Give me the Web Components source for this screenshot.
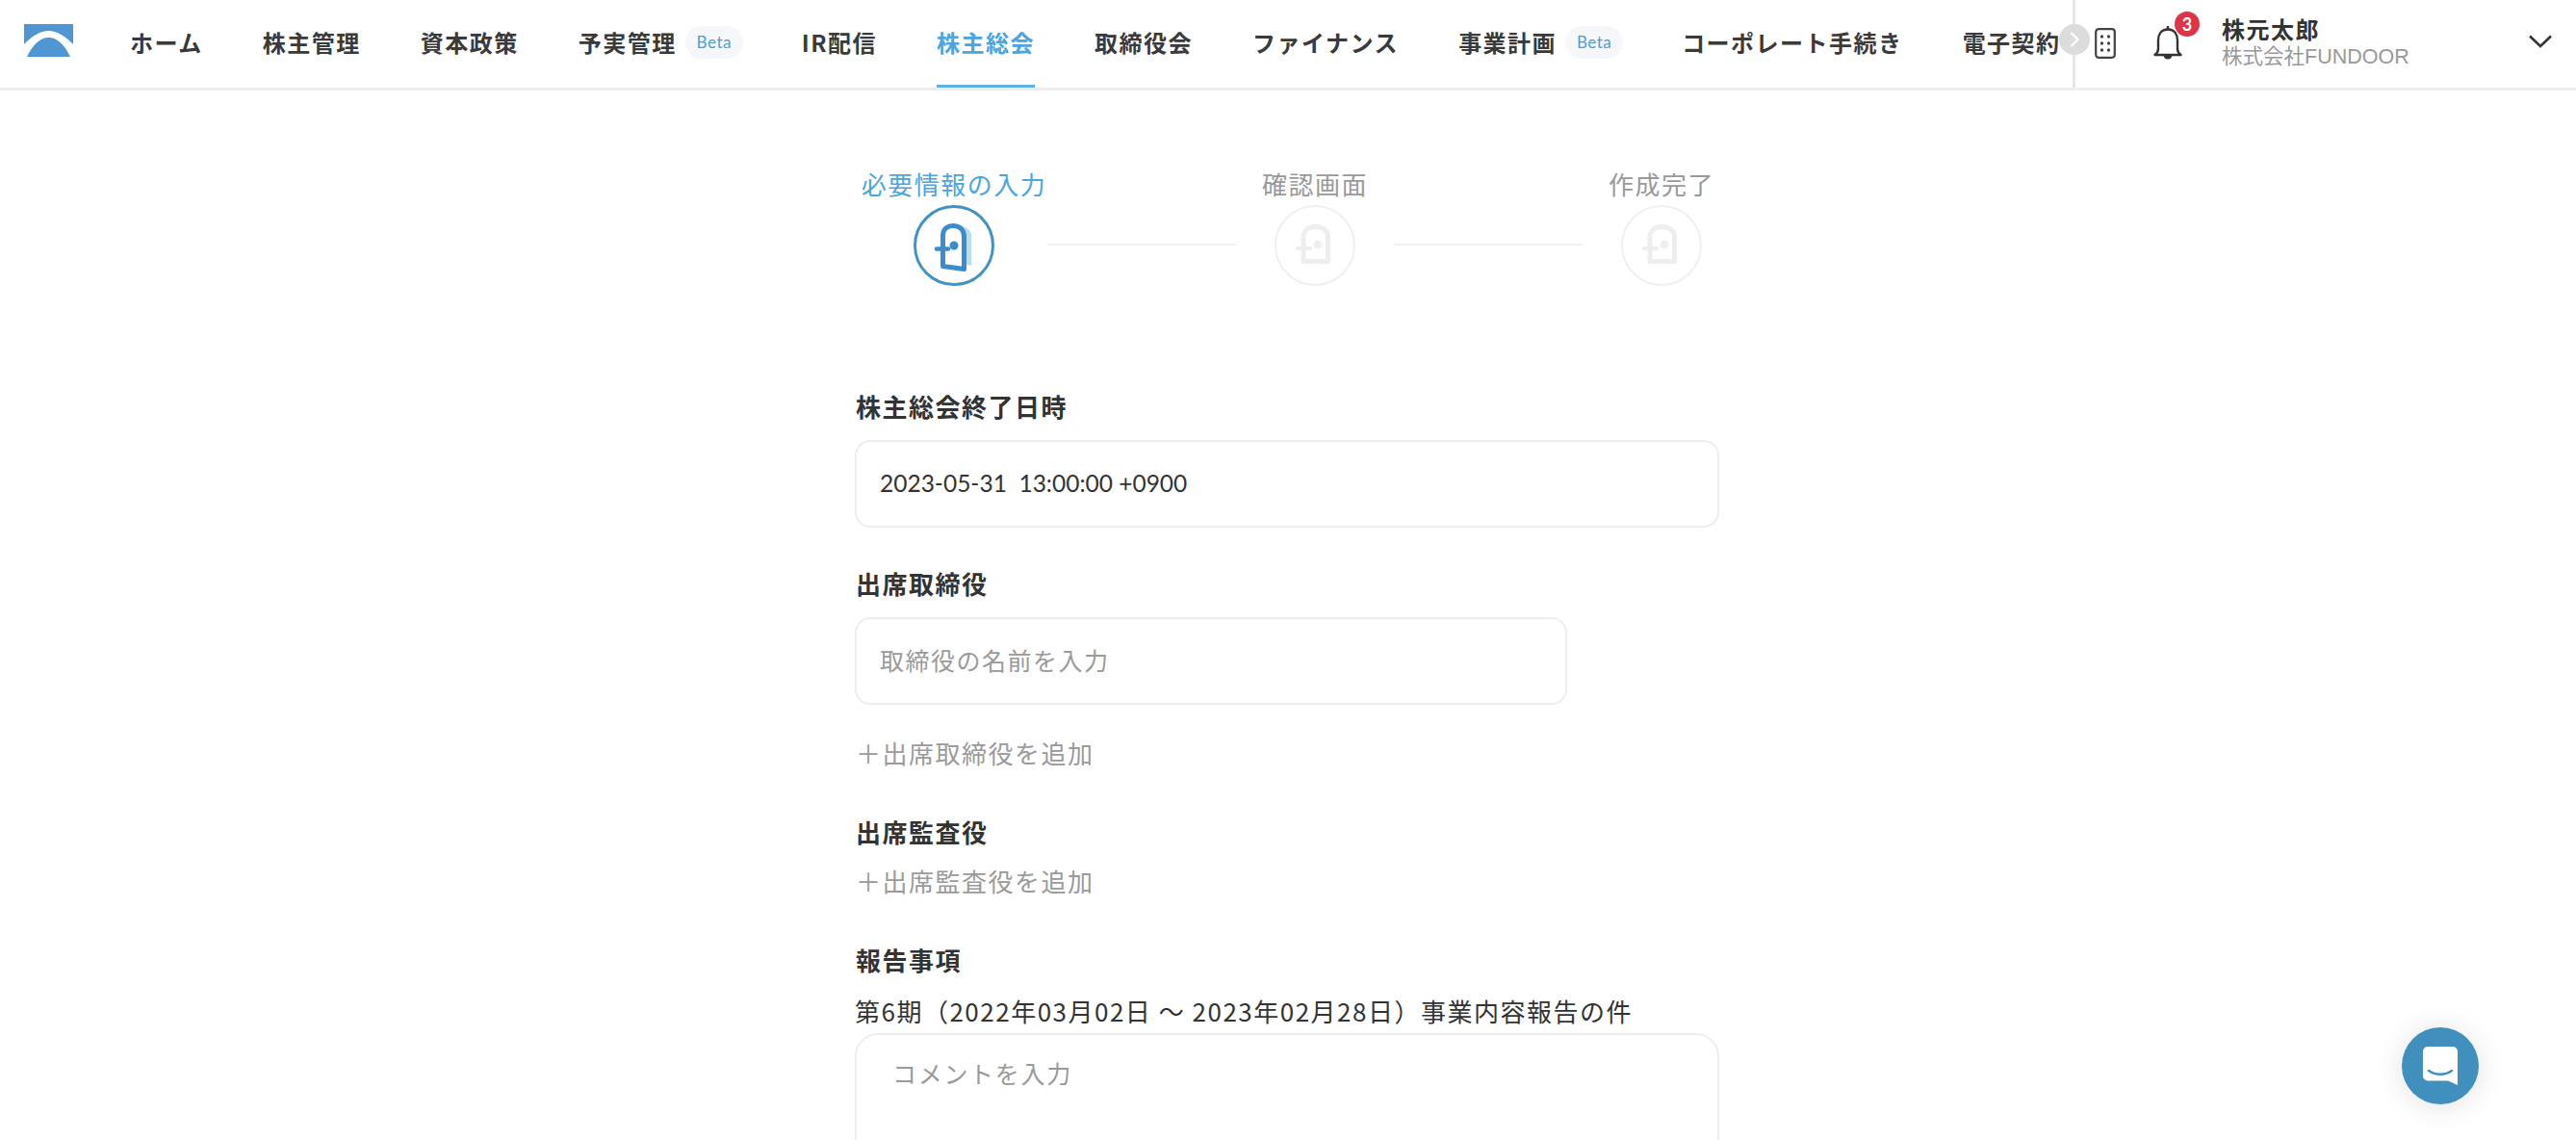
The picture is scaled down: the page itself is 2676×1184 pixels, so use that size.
<!DOCTYPE html>
<html lang="ja">
<head>
<meta charset="utf-8">
<title>株主総会</title>
<style>
html, body { margin: 0; height: 100%; background: #fff; overflow: hidden; }
body { font-family: "Noto Sans CJK JP", sans-serif; color: #333; }
</style>
</head>
<body>
<app-page>
  <app-header slot="header">
    <nav-item>ホーム</nav-item>
    <nav-item>株主管理</nav-item>
    <nav-item>資本政策</nav-item>
    <nav-item beta>予実管理</nav-item>
    <nav-item>IR配信</nav-item>
    <nav-item active>株主総会</nav-item>
    <nav-item>取締役会</nav-item>
    <nav-item>ファイナンス</nav-item>
    <nav-item beta>事業計画</nav-item>
    <nav-item>コーポレート手続き</nav-item>
    <nav-item>電子契約</nav-item>
    <nav-item>登記</nav-item>
  </app-header>
  <step-bar>
    <step-item active>必要情報の入力</step-item>
    <step-line></step-line>
    <step-item>確認画面</step-item>
    <step-line></step-line>
    <step-item>作成完了</step-item>
  </step-bar>
  <form-area>
    <field-label>株主総会終了日時</field-label>
    <text-box value>2023-05-31&nbsp; 13:00:00 +0900</text-box>
    <field-label style="margin-top:41px">出席取締役</field-label>
    <text-box style="width:740px">取締役の名前を入力</text-box>
    <add-link style="margin-top:33px">＋出席取締役を追加</add-link>
    <field-label style="margin-top:46px">出席監査役</field-label>
    <add-link style="margin-top:15px">＋出席監査役を追加</add-link>
    <field-label style="margin-top:46px">報告事項</field-label>
    <report-title>第6期（2022年03月02日 〜 2023年02月28日）事業内容報告の件</report-title>
    <comment-box>コメントを入力</comment-box>
  </form-area>
  <chat-fab></chat-fab>
</app-page>

<script>
const latin = '"Lato", "Noto Sans CJK JP", sans-serif';

// helper : shadow root + contenu
function monte(el, html) {
  el.attachShadow({ mode: "open" });
  el.shadowRoot.innerHTML = html;
}

class AppPage extends HTMLElement {
  connectedCallback() {
    monte(this, `
      <style>
        :host { display: flex; flex-direction: column; height: 100vh; overflow: hidden; position: relative; }
        main { display: flex; flex-direction: column; padding: 84px 0 0 888px; width: 898px; }
      </style>
      <slot name="header"></slot>
      <main><slot></slot></main>`);
  }
}

class AppHeader extends HTMLElement {
  connectedCallback() {
    monte(this, `
      <style>
        :host { display: flex; flex: none; height: 94px; box-sizing: border-box; border-bottom: 3px solid #eeeeee; position: relative; }
        .logo { flex: none; width: 51px; height: 34px; margin: 25px 59px 0 25px; }
        nav { flex: 1; min-width: 0; display: flex; gap: 62px; overflow: hidden; margin-right: 12px; }
        .right { flex: none; width: 523px; box-sizing: border-box; border-left: 3px solid #e6e6e6; display: flex; align-items: center; padding-left: 20px; position: relative; }
        .more { position: absolute; left: -17px; top: 25px; width: 32px; height: 32px; border-radius: 50%; background: #dcdcdc; display: flex; align-items: center; justify-content: center; }
        .apps { width: 22px; height: 32px; margin-top: -1px; }
        .bell-wrap { position: relative; width: 32px; height: 38px; margin: -1px 0 0 38px; }
        .bell-wrap svg { width: 32px; height: 38px; display: block; }
        .badge { position: absolute; left: 23px; top: -14px; width: 26px; height: 26px; border-radius: 50%; background: #dc3545; color: #fff; font: 700 18px/26px ${latin}; text-align: center; }
        .user { margin: -3px 0 0 40px; width: 318px; }
        .name { font-size: 24px; font-weight: 700; letter-spacing: 1.500px; line-height: 30px; color: #333; }
        .org { font-family: "Liberation Sans", "Noto Sans CJK JP", sans-serif; font-size: 21.500px; line-height: 28px; color: #999; white-space: nowrap; }
        .down { width: 26px; height: 16px; margin-top: -6px; }
      </style>
      <svg class="logo" viewBox="0 0 51 34">
        <path fill="#4f96d3" d="M0 0H51V21C42 12 34 7 25.5 7C17 7 9 12 0 21Z"/>
        <path fill="#4f96d3" d="M3 34C9 21 17 14 25.5 14C34 14 42 21 48 34Z"/>
      </svg>
      <nav><slot></slot></nav>
      <div class="right">
        <span class="more"><svg width="12" height="18" viewBox="0 0 12 18"><path d="M2.500 2L9.500 9L2.500 16" fill="none" stroke="#fff" stroke-width="2.200"/></svg></span>
        <svg class="apps" viewBox="0 0 22 32">
          <rect x="1.200" y="1.200" width="19.600" height="29.600" rx="3" fill="none" stroke="#444" stroke-width="2.200"/>
          <g fill="#444">
            <circle cx="7.500" cy="9" r="1.700"/><circle cx="14.500" cy="9" r="1.700"/>
            <circle cx="7.500" cy="16" r="1.700"/><circle cx="14.500" cy="16" r="1.700"/>
            <circle cx="7.500" cy="23" r="1.700"/><circle cx="14.500" cy="23" r="1.700"/>
          </g>
        </svg>
        <span class="bell-wrap">
          <svg viewBox="0 0 32 38">
            <path d="M16 4.500C9 4.500 6 10 6 16V25C6 28 4.500 29.500 2.500 31H29.500C27.500 29.500 26 28 26 25V16C26 10 23 4.500 16 4.500Z" fill="none" stroke="#333" stroke-width="2.400" stroke-linejoin="round"/>
            <path d="M16 1V4.500" stroke="#333" stroke-width="2.400"/>
            <path d="M11.500 31C11.500 37 20.500 37 20.500 31Z" fill="#333"/>
          </svg>
          <span class="badge">3</span>
        </span>
        <div class="user">
          <div class="name">株元太郎</div>
          <div class="org">株式会社FUNDOOR</div>
        </div>
        <svg class="down" viewBox="0 0 26 16"><path d="M2 2.500L13 13L24 2.500" fill="none" stroke="#333" stroke-width="2.600"/></svg>
      </div>`);
  }
}

class NavItem extends HTMLElement {
  connectedCallback() {
    const beta = this.hasAttribute("beta") ? `<span class="beta">Beta</span>` : "";
    monte(this, `
      <style>
        :host { display: flex; flex: none; align-items: center; height: 91px; box-sizing: border-box; border-bottom: 3px solid transparent; padding-bottom: 1px; font-size: 24px; font-weight: 700; letter-spacing: 1.500px; color: #3a3a3a; white-space: nowrap; }
        :host([active]) { color: #4aa5e0; border-bottom-color: #5fb2e6; }
        .beta { margin: 0 -1px 0 9px; width: 60px; height: 34px; border-radius: 17px; background: #f5f7fa; color: #4f9fd0; font: 400 17px/34px ${latin}; letter-spacing: .5px; text-align: center; }
      </style>
      <slot></slot>${beta}`);
  }
}

class StepBar extends HTMLElement {
  connectedCallback() {
    monte(this, `
      <style>
        :host { display: flex; margin-left: 6px; }
      </style>
      <slot></slot>`);
  }
}

class StepItem extends HTMLElement {
  connectedCallback() {
    const on = this.hasAttribute("active");
    const door = on
      ? `<path d="M41 21C48 20 57 22 60 30V63L52 61Z" fill="#b9dcef"/>
         <path d="M30.500 63.500V32C30.500 24 36 21.500 41 21.500C48 21.500 52.500 26 52.500 33V66.500Z" fill="#fff" stroke="#3c8ccb" stroke-width="5" stroke-linejoin="round"/>
         <path d="M24 45.500H36" stroke="#3c8ccb" stroke-width="4.500" stroke-linecap="round"/>
         <circle cx="42" cy="42" r="4.500" fill="#3c8ccb"/>`
      : `<path d="M30 58.500V33C30 26 35 22.500 42.500 22.500C50 22.500 55.500 26 55.500 33V58.500Z" fill="none" stroke="#eeeeee" stroke-width="5" stroke-linejoin="round"/>
         <path d="M24 45H37" stroke="#eeeeee" stroke-width="4.500" stroke-linecap="round"/>
         <circle cx="45" cy="41" r="4.500" fill="#eeeeee"/>`;
    monte(this, `
      <style>
        :host { display: flex; flex-direction: column; align-items: center; width: 164px; flex: none; font-size: 26px; line-height: 26px; letter-spacing: 1.500px; color: #999; white-space: nowrap; }
        :host([active]) { width: 194px; color: #4aa5e0; }
        svg { width: 84px; height: 84px; margin-top: 9px; display: block; }
      </style>
      <slot></slot>
      <svg viewBox="0 0 84 84">
        <circle cx="42" cy="42" r="${on ? 40.500 : 41}" fill="none" stroke="${on ? '#4293c4' : '#f0f0f0'}" stroke-width="${on ? 3 : 2}"/>
        ${door}
      </svg>`);
  }
}

class StepLine extends HTMLElement {
  connectedCallback() {
    monte(this, `
      <style>
        :host { display: block; flex: none; width: 196px; height: 2px; margin-top: 75px; background: #f1f1f1; }
      </style>`);
  }
}

class FormArea extends HTMLElement {
  connectedCallback() {
    monte(this, `
      <style>
        :host { display: flex; flex-direction: column; margin-top: 108px; }
      </style>
      <slot></slot>`);
  }
}

class FieldLabel extends HTMLElement {
  connectedCallback() {
    monte(this, `
      <style>
        :host { display: block; padding: 0 0 2px 1px; font-size: 26px; font-weight: 700; line-height: 34px; letter-spacing: 1.500px; color: #333; }
      </style>
      <slot></slot>`);
  }
}

class TextBox extends HTMLElement {
  connectedCallback() {
    monte(this, `
      <style>
        :host { display: flex; align-items: center; box-sizing: border-box; height: 91px; margin-top: 16px; padding: 0 0 3px 24px; border: 2px solid #eeeeee; border-radius: 16px; font-size: 25px; color: #9a9a9a; letter-spacing: 1.500px; }
        :host([value]) { font-family: ${latin}; color: #333; letter-spacing: 0; font-size: 24.500px; padding-bottom: 2px; }
      </style>
      <slot></slot>`);
  }
}

class AddLink extends HTMLElement {
  connectedCallback() {
    monte(this, `
      <style>
        :host { display: block; padding: 0 0 2px 1px; font-size: 26px; line-height: 34px; letter-spacing: 1.500px; color: #9a9a9a; }
      </style>
      <slot></slot>`);
  }
}

class ReportTitle extends HTMLElement {
  connectedCallback() {
    monte(this, `
      <style>
        :host { display: block; margin-top: 17px; padding-bottom: 2px; font-size: 26px; line-height: 34px; letter-spacing: 1.500px; color: #333; white-space: nowrap; }
      </style>
      <slot></slot>`);
  }
}

class CommentBox extends HTMLElement {
  connectedCallback() {
    monte(this, `
      <style>
        :host { display: block; box-sizing: border-box; height: 240px; margin-top: 4px; padding: 21px 0 0 37px; border: 2px solid #eeeeee; border-radius: 24px; font-size: 25px; line-height: 36px; letter-spacing: 1.700px; color: #9a9a9a; }
      </style>
      <slot></slot>`);
  }
}

class ChatFab extends HTMLElement {
  connectedCallback() {
    monte(this, `
      <style>
        :host { position: fixed; left: 2495px; top: 1067px; width: 80px; height: 80px; border-radius: 50%; background: #418fbc; box-shadow: 0 2px 30px rgba(0,0,0,.12); display: flex; align-items: center; justify-content: center; }
        svg { width: 36px; height: 40px; }
      </style>
      <svg viewBox="0 0 36 40">
        <path fill="#fff" d="M5 0H31A5 5 0 0 1 36 5V40L26 35.500H5A5 5 0 0 1 0 30.500V5A5 5 0 0 1 5 0Z"/>
        <path fill="none" stroke="#418fbc" stroke-width="2.400" stroke-linecap="round" d="M6 25C13 30 23 30 30 25"/>
      </svg>`);
  }
}

customElements.define("app-page", AppPage);
customElements.define("app-header", AppHeader);
customElements.define("nav-item", NavItem);
customElements.define("step-bar", StepBar);
customElements.define("step-item", StepItem);
customElements.define("step-line", StepLine);
customElements.define("form-area", FormArea);
customElements.define("field-label", FieldLabel);
customElements.define("text-box", TextBox);
customElements.define("add-link", AddLink);
customElements.define("report-title", ReportTitle);
customElements.define("comment-box", CommentBox);
customElements.define("chat-fab", ChatFab);
</script>
</body>
</html>
